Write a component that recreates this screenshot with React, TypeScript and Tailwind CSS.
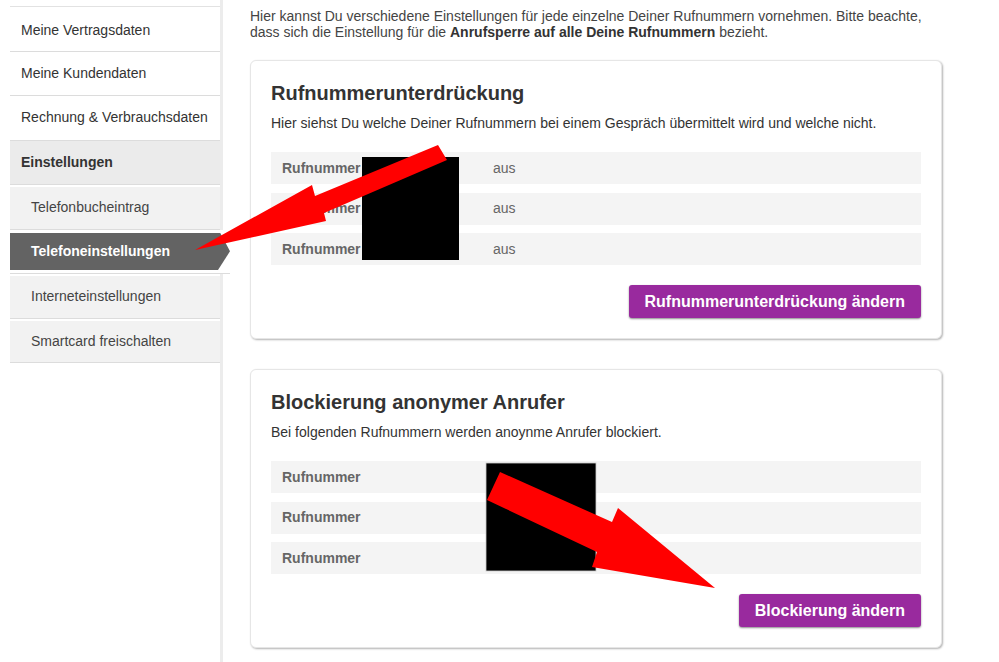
import React from "react";

const topItems = ["Meine Vertragsdaten", "Meine Kundendaten", "Rechnung & Verbrauchsdaten"];
const subItems = ["Telefonbucheintrag", "Telefoneinstellungen", "Interneteinstellungen", "Smartcard freischalten"];

function Row({ value }: { value?: string }) {
  return (
    <div className="flex h-[32px] items-center bg-[#f4f4f4] pl-[11px] text-[14px]">
      <span className="w-[211px] font-bold text-[#666]">Rufnummer</span>
      {value && <span className="text-[#666]">{value}</span>}
    </div>
  );
}

function Card({
  title,
  desc,
  values,
  button,
}: {
  title: string;
  desc: string;
  values: (string | undefined)[];
  button: string;
}) {
  return (
    <div className="rounded-[6px] border border-[#e6e6e6] bg-white px-[20px] pb-[20px] pt-[20px] shadow-[1px_1px_2px_rgba(0,0,0,0.3)]">
      <h2 className="text-[20px] font-bold leading-[24px] text-[#333]">{title}</h2>
      <p className="mt-[8px] text-[14px] leading-[20px] text-[#333]">{desc}</p>
      <div className="mt-[19px] flex flex-col gap-[8.5px]">
        {values.map((v, i) => (
          <Row key={i} value={v} />
        ))}
      </div>
      <div className="mt-[20px] flex justify-end">
        <button className="h-[33px] rounded-[3px] bg-[#992a9e] px-[16px] text-[16px] font-bold text-white shadow-[0_1px_2px_rgba(0,0,0,0.45)]">
          {button}
        </button>
      </div>
    </div>
  );
}

export default function App() {
  return (
    <div className="relative h-[662px] w-[999px] overflow-hidden bg-white font-['Liberation_Sans',Arial,sans-serif]">
      <div className="flex">
        {/* Sidebar */}
        <div className="ml-[10px] h-[662px] w-[213px] border-r-[3px] border-[#ececec] pt-[6px]">
          <div className="border-t border-[#e2e2e2]">
            {topItems.map((t, i) => (
              <div
                key={t}
                className={
                  i === 0
                    ? "flex h-[44.5px] items-center border-b border-[#dcdcdc] bg-white pl-[11px] pt-[4px] text-[14px] text-[#333]"
                    : "flex h-[44.5px] items-center border-b border-[#dcdcdc] bg-white pl-[11px] text-[14px] text-[#333]"
                }
              >
                {t}
              </div>
            ))}
            <div className="flex h-[44.5px] items-center border-b border-[#dcdcdc] bg-[#ebebeb] pl-[11px] text-[14px] font-bold text-[#333]">
              Einstellungen
            </div>
            {subItems.map((t) =>
              t === "Telefoneinstellungen" ? (
                <div key={t} className="relative z-10 h-[44.5px] w-[220px] border-b border-[#dcdcdc] bg-white py-[3px]">
                  <div className="flex h-full items-center bg-[#636363] pl-[21px] text-[14px] font-bold text-white [clip-path:polygon(0_0,210px_0,220px_50%,208px_100%,0_100%)]">
                    {t}
                  </div>
                </div>
              ) : (
                <div
                  key={t}
                  className="flex h-[44.5px] items-center border-t-2 border-b border-t-white border-b-[#dcdcdc] bg-[#f2f2f2] pl-[21px] text-[14px] text-[#444]"
                >
                  {t}
                </div>
              )
            )}
          </div>
        </div>

        {/* Main */}
        <div className="ml-[27px] w-[692px] pt-[8px]">
          <p className="text-[14px] leading-[16px] text-[#444]">
            Hier kannst Du verschiedene Einstellungen für jede einzelne Deiner Rufnummern vornehmen. Bitte beachte,
            <br />
            dass sich die Einstellung für die <b className="text-[#333]">Anrufsperre auf alle Deine Rufnummern</b> bezieht.
          </p>
          <div className="mt-[20px]">
            <Card
              title="Rufnummerunterdrückung"
              desc="Hier siehst Du welche Deiner Rufnummern bei einem Gespräch übermittelt wird und welche nicht."
              values={["aus", "aus", "aus"]}
              button="Rufnummerunterdrückung ändern"
            />
          </div>
          <div className="mt-[30px]">
            <Card
              title="Blockierung anonymer Anrufer"
              desc="Bei folgenden Rufnummern werden anoynme Anrufer blockiert."
              values={[undefined, undefined, undefined]}
              button="Blockierung ändern"
            />
          </div>
        </div>
      </div>

      {/* Overlay: redactions and arrows */}
      <svg
        className="pointer-events-none absolute left-0 top-0 z-20"
        width="999"
        height="662"
        viewBox="0 0 999 662"
      >
        <rect x="362" y="157" width="97" height="103" fill="#000" />
        <rect x="486" y="463" width="110" height="108" fill="#000" stroke="#ccc" strokeWidth="0.8" />
        <polygon
          points="438,145 447,160 324,213 326,221 195,250 312,185 315,196"
          fill="#ff0000"
        />
        <polygon
          points="500,472 612,522 618,508 715,588 592,567 597,552 487,500"
          fill="#ff0000"
        />
      </svg>
    </div>
  );
}
